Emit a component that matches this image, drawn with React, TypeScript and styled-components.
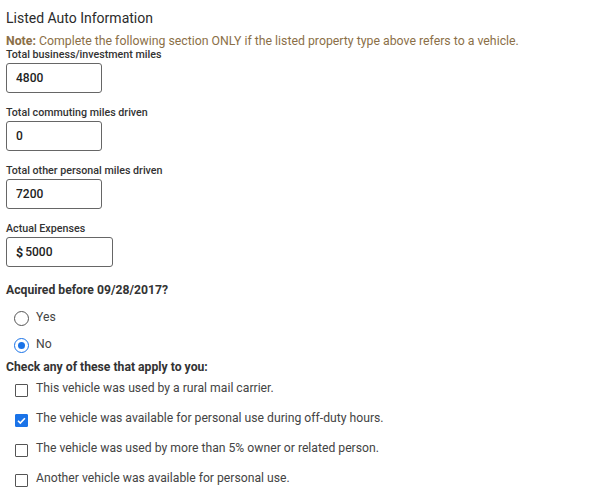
import React from 'react';
import styled, { createGlobalStyle } from 'styled-components';

const GlobalStyle = createGlobalStyle`
	body {
		margin: 0;
		background: #ffffff;
		font-family: Roboto, 'Noto Sans', Arial, sans-serif;
		color: #333333;
	}
`;

type Field = { label: string; value: string; prefix?: string; width: number };

const fields: Field[] = [
	{ label: 'Total business/investment miles', value: '4800', width: 96 },
	{ label: 'Total commuting miles driven', value: '0', width: 96 },
	{ label: 'Total other personal miles driven', value: '7200', width: 96 },
	{ label: 'Actual Expenses', value: '5000', prefix: '$', width: 107 },
];

const checks = [
	{ text: 'This vehicle was used by a rural mail carrier.', checked: false },
	{ text: 'The vehicle was available for personal use during off-duty hours.', checked: true },
	{ text: 'The vehicle was used by more than 5% owner or related person.', checked: false },
	{ text: 'Another vehicle was available for personal use.', checked: false },
];

export default function App() {
	return (
		<>
			<GlobalStyle />
			<Section>
				<Title>Listed Auto Information</Title>
				<Note>
					<b>Note:</b> Complete the following section ONLY if the listed property type above refers
					to a vehicle.
				</Note>
				<Fields>
					{fields.map((f) => (
						<FieldGroup key={f.label}>
							<Label>{f.label}</Label>
							<InputBox $width={f.width}>
								{f.prefix && <Prefix>{f.prefix}</Prefix>}
								<Input value={f.value} readOnly />
							</InputBox>
						</FieldGroup>
					))}
				</Fields>
				<Question>Acquired before 09/28/2017?</Question>
				<RadioList>
					<RadioRow>
						<Radio />
						<OptionText>Yes</OptionText>
					</RadioRow>
					<RadioRow>
						<Radio $checked />
						<OptionText>No</OptionText>
					</RadioRow>
				</RadioList>
				<Heading>Check any of these that apply to you:</Heading>
				<CheckList>
					{checks.map((c) => (
						<CheckRow key={c.text}>
							<Checkbox $checked={c.checked}>
								{c.checked && (
									<svg width="11" height="11" viewBox="0 0 12 12">
										<path d="M2.2 6.3l2.5 2.5 5-5.2" fill="none" stroke="#fff" strokeWidth="1.8" />
									</svg>
								)}
							</Checkbox>
							<OptionText>{c.text}</OptionText>
						</CheckRow>
					))}
				</CheckList>
			</Section>
		</>
	);
}

const Section = styled.div`
	padding: 8px 6px 0;
	display: flex;
	flex-direction: column;
`;

const Title = styled.div`
	font-size: 14px;
	line-height: 20px;
	color: #2b2b2b;
`;

const Note = styled.div`
	margin-top: 6px;
	font-size: 12.3px;
	line-height: 14px;
	color: #8b6f47;
	b {
		font-weight: 700;
	}
`;

const Fields = styled.div`
	display: flex;
	flex-direction: column;
	gap: 13px;
`;

const FieldGroup = styled.div`
	display: flex;
	flex-direction: column;
	align-items: flex-start;
`;

const Label = styled.div`
	font-size: 10.7px;
	line-height: 14px;
	font-weight: 500;
	color: #333;
	margin-bottom: 1px;
`;

const InputBox = styled.label<{ $width: number }>`
	box-sizing: border-box;
	width: ${(p) => p.$width}px;
	height: 30px;
	border: 1.5px solid #666;
	border-radius: 3px;
	display: flex;
	align-items: center;
	padding-left: 9px;
`;

const Prefix = styled.span`
	font-size: 12.5px;
	font-weight: 700;
	color: #222;
	margin-right: 2px;
`;

const Input = styled.input`
	border: none;
	outline: none;
	padding: 0;
	width: 100%;
	font-family: Roboto, Arial, sans-serif;
	font-size: 12px;
	font-weight: 500;
	color: #222;
	background: transparent;
`;

const Question = styled.div`
	margin-top: 15px;
	font-size: 12.2px;
	line-height: 16px;
	font-weight: 700;
	color: #333;
`;

const RadioList = styled.div`
	padding-top: 7px;
	display: flex;
	flex-direction: column;
`;

const RadioRow = styled.div`
	height: 27px;
	display: flex;
	align-items: center;
	padding-left: 8px;
	gap: 7px;
`;

const Radio = styled.span<{ $checked?: boolean }>`
	box-sizing: border-box;
	width: 15px;
	height: 15px;
	border-radius: 50%;
	border: 1.6px solid ${(p) => (p.$checked ? '#1a73e8' : '#555')};
	display: flex;
	align-items: center;
	justify-content: center;
	&::after {
		content: '';
		width: 7px;
		height: 7px;
		border-radius: 50%;
		background: #1a73e8;
		display: ${(p) => (p.$checked ? 'block' : 'none')};
	}
`;

const OptionText = styled.span`
	font-size: 12.2px;
	color: #444;
	margin-top: -4px;
`;

const Heading = styled.div`
	font-size: 12.2px;
	line-height: 16px;
	font-weight: 700;
	color: #333;
`;

const CheckList = styled.div`
	display: flex;
	flex-direction: column;
`;

const CheckRow = styled.div`
	height: 30px;
	display: flex;
	align-items: center;
	padding-left: 9px;
	gap: 8px;
`;

const Checkbox = styled.span<{ $checked: boolean }>`
	box-sizing: border-box;
	width: 13px;
	height: 13px;
	border-radius: 1px;
	border: 1.5px solid ${(p) => (p.$checked ? '#1a73e8' : '#555')};
	background: ${(p) => (p.$checked ? '#1a73e8' : '#fff')};
	display: flex;
	align-items: center;
	justify-content: center;
`;
